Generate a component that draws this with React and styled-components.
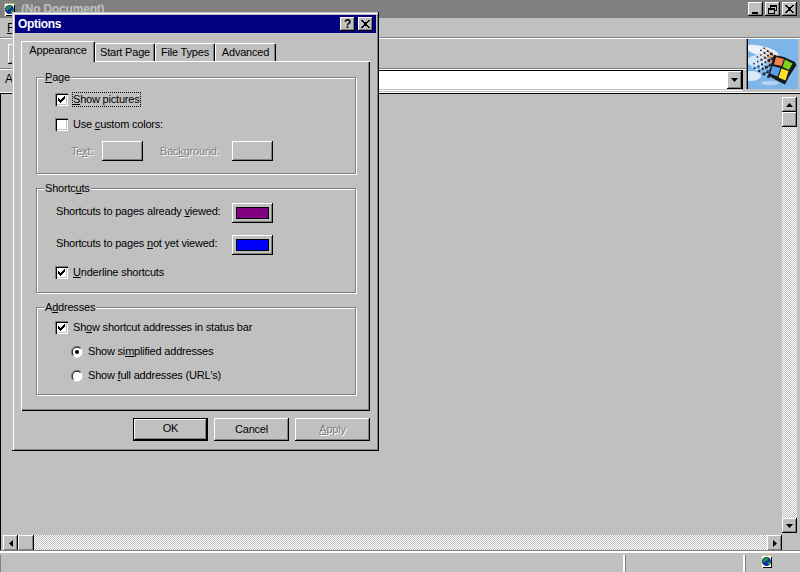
import React from "react";
import styled, { createGlobalStyle, css } from "styled-components";

const Global = createGlobalStyle`
  html, body { margin: 0; padding: 0; background: #c0c0c0; }
  body { font-family: "Liberation Sans", Arial, sans-serif; font-size: 11px; letter-spacing: -0.2px; color: #000; }
  * { box-sizing: border-box; }
  u { text-underline-offset: 1px; text-decoration-thickness: 1px; }
`;

const raised = css`
  box-shadow: inset -1px -1px 0 #000, inset 1px 1px 0 #fff, inset -2px -2px 0 #808080;
  background: #c0c0c0;
`;

const Screen = styled.div`
  position: relative;
  width: 800px;
  height: 572px;
  overflow: hidden;
  background: #c0c0c0;
  display: flex;
  flex-direction: column;
`;

/* ---------- background application ---------- */
const AppTitle = styled.div`
  height: 18px;
  background: #808080;
  display: flex;
  align-items: center;
  padding: 0 3px 0 4px;
  color: #c0c0c0;
  font-weight: 700;
  font-size: 12px;
`;
const AppTitleText = styled.span`
  margin-left: 5px;
  flex: 1;
`;
const CaptionButton = styled.div`
  ${raised}
  width: 15px;
  height: 14px;
  margin-left: ${(p) => p.$gap || 0}px;
  display: flex;
  align-items: center;
  justify-content: center;
`;
const MenuBar = styled.div`
  height: 20px;
  padding: 3px 0 0 7px;
  line-height: 14px;
  font-size: 12px;
  border-bottom: 1px solid #808080;
`;
const Chrome = styled.div`
  height: 55px;
  display: flex;
  border-top: 1px solid #fff;
`;
const Bands = styled.div`
  flex: 1;
  display: flex;
  flex-direction: column;
`;
const ToolBand = styled.div`
  height: 30px;
  padding: 5px 0 0 8px;
  border-bottom: 1px solid #808080;
  box-shadow: 0 1px 0 #fff;
`;
const ToolButton = styled.div`
  ${raised}
  width: 24px;
  height: 20px;
`;
const AddressBand = styled.div`
  flex: 1;
  display: flex;
  align-items: flex-start;
  padding: 1px 5px 0 5px;
  gap: 12px;
`;
const AddressLabel = styled.span`
  font-size: 12px;
  line-height: 19px;
  width: 8px;
`;
const AddressBox = styled.div`
  flex: 1;
  height: 20px;
  background: #fff;
  border-top: 1px solid #000;
  border-left: 1px solid #000;
  border-right: 1px solid #000;
  border-bottom: 1px solid #c0c0c0;
  box-shadow: 0 1px 0 #fff;
  display: flex;
  justify-content: flex-end;
`;
const DropButton = styled.div`
  ${raised}
  width: 15px;
  height: 18px;
  display: flex;
  align-items: center;
  justify-content: center;
`;
const LogoFrame = styled.div`
  width: 50px;
  height: 50px;
  margin: 0 2px 0 0;
  box-shadow: -1px 0 0 #000, -2px 0 0 #808080;
  overflow: hidden;
`;
const Workspace = styled.div`
  flex: 1;
  display: flex;
  flex-direction: column;
  padding: 1px 3px 0 2px;
  border-top: 1px solid #000;
  border-left: 1px solid #000;
  box-shadow: 0 -1px 0 #fff;
`;
const WorkRow = styled.div`
  flex: 1;
  display: flex;
  justify-content: flex-end;
  padding-top: 2px;
`;
const dither = css`
  background-color: #c0c0c0;
  background-image: conic-gradient(#fff 25%, #c0c0c0 0 50%, #fff 0 75%, #c0c0c0 0);
  background-size: 2px 2px;
`;
const VScroll = styled.div`
  width: 15px;
  ${dither}
  display: flex;
  flex-direction: column;
  margin-bottom: 2px;
`;
const HRow = styled.div`
  height: 16px;
  display: flex;
`;
const HScroll = styled.div`
  flex: 1;
  ${dither}
  display: flex;
  height: 16px;
`;
const ScrollButton = styled.div`
  ${raised}
  width: ${(p) => (p.$wide ? 16 : 15)}px;
  height: ${(p) => (p.$tall ? 16 : 15)}px;
  flex: none;
  display: flex;
  align-items: center;
  justify-content: center;
  ${(p) => p.$end && "margin-top: auto;"}
  ${(p) => p.$endX && "margin-left: auto;"}
`;
const Corner = styled.div`
  width: 15px;
  background: #c0c0c0;
`;
const StatusBar = styled.div`
  height: 21px;
  display: flex;
  border-top: 2px solid #fff;
  box-shadow: 0 -1px 0 #808080;
  padding-top: 2px;
`;
const StatusCell = styled.div`
  width: ${(p) => p.$w}px;
  ${(p) => p.$grow && "flex: 1;"}
  border-right: 2px solid #fff;
  border-left: 1px solid #808080;
  display: flex;
  padding-left: ${(p) => p.$pad || 0}px;
  &:last-child { border-right: 0; }
`;

/* ---------- dialog ---------- */
const Dialog = styled.div`
  position: absolute;
  left: 12px;
  top: 12px;
  width: 367px;
  height: 439px;
  padding: 3px;
  background: #c0c0c0;
  box-shadow: inset -1px -1px 0 #000, inset 1px 1px 0 #c0c0c0, inset 2px 2px 0 #fff, inset -2px -2px 0 #808080;
`;
const DialogTitle = styled.div`
  height: 18px;
  background: #000080;
  color: #fff;
  font-weight: 700;
  font-size: 12px;
  letter-spacing: -0.3px;
  display: flex;
  align-items: center;
  padding: 0 3px 0 3px;
`;
const DialogTitleText = styled.span`
  flex: 1;
`;
const DialogBody = styled.div`
  padding: 8px 6px 0 6px;
`;
const Tabs = styled.div`
  display: flex;
  height: 20px;
  align-items: flex-end;
  position: relative;
  z-index: 1;
`;
const Tab = styled.div`
  height: ${(p) => (p.$active ? 21 : 18)}px;
  width: ${(p) => p.$w}px;
  margin-bottom: ${(p) => (p.$active ? -1 : 0)}px;
  background: #c0c0c0;
  border-radius: 2px 2px 0 0;
  border-top: 1px solid #fff;
  border-left: 1px solid #fff;
  border-right: 1px solid #000;
  box-shadow: inset -1px 0 0 #808080;
  display: flex;
  justify-content: center;
  padding-top: ${(p) => (p.$active ? 1 : 1)}px;
  line-height: 14px;
`;
const Pane = styled.div`
  width: 349px;
  height: 350px;
  padding: 16px 14px 0 15px;
  box-shadow: inset 1px 1px 0 #fff, inset -1px -1px 0 #000, inset -2px -2px 0 #808080;
  display: flex;
  flex-direction: column;
  gap: 14px;
`;
const Group = styled.div`
  position: relative;
  height: ${(p) => p.$h}px;
  width: 320px;
  border: 1px solid #808080;
  box-shadow: 1px 1px 0 #fff, inset 1px 1px 0 #fff;
  padding: ${(p) => p.$pad}px 0 0 18px;
  display: flex;
  flex-direction: column;
`;
const Legend = styled.div`
  position: absolute;
  top: -8px;
  left: 7px;
  padding: 0 1px;
  line-height: 14px;
  background: #c0c0c0;
`;
const CheckRow = styled.div`
  height: 15px;
  display: flex;
  align-items: center;
  margin-top: ${(p) => p.$top || 0}px;
  padding-left: ${(p) => p.$indent || 0}px;
`;
const CheckBox = styled.div`
  width: 13px;
  height: 13px;
  flex: none;
  background: #fff;
  box-shadow: inset 1px 1px 0 #808080, inset 2px 2px 0 #000, inset -1px -1px 0 #fff, inset -2px -2px 0 #c0c0c0;
  display: flex;
  align-items: center;
  justify-content: center;
`;
const CheckLabel = styled.span`
  margin-left: 4px;
  padding: 0 1px;
  line-height: 15px;
  white-space: nowrap;
  ${(p) => p.$focus && "outline: 1px dotted #000; outline-offset: -1px;"}
`;
const RadioIcon = styled.svg`
  flex: none;
  display: block;
`;
const ColorGrid = styled.div`
  display: grid;
  grid-template-columns: 31px 41px 17px 72px 41px;
  margin: 9px 0 0 16px;
  align-items: center;
  height: 20px;
`;
const Disabled = styled.span`
  color: #808080;
  text-shadow: 1px 1px 0 #fff;
  grid-column: ${(p) => p.$col || "auto"};
  white-space: nowrap;
`;
const ColorRow = styled.div`
  width: 217px;
  height: 20px;
  margin: ${(p) => p.$top || 0}px 0 0 1px;
  display: flex;
  justify-content: space-between;
  align-items: center;
  white-space: nowrap;
`;
const ColorRowLabel = styled.span`
  padding-bottom: 4px;
`;
const ColorButton = styled.div`
  ${raised}
  width: 41px;
  height: 20px;
  padding: 4px;
  display: flex;
  flex: none;
`;
const Swatch = styled.div`
  flex: 1;
  border: 1px solid #000;
  background: ${(p) => p.$color};
`;
const Buttons = styled.div`
  display: flex;
  justify-content: flex-end;
  gap: 6px;
  margin-top: 7px;
`;
const PushButton = styled.div`
  width: 75px;
  height: 23px;
  ${raised}
  display: flex;
  align-items: center;
  justify-content: center;
  padding-bottom: 2px;
  ${(p) => p.$default && "border: 1px solid #000; padding-bottom: 3px;"}
`;

/* ---------- drawings ---------- */
const Arrow = ({ dir }) => {
  const pts = {
    up: "0,4 7,4 3.5,0",
    down: "0,0 7,0 3.5,4",
    left: "4,0 4,7 0,3.5",
    right: "0,0 0,7 4,3.5",
  }[dir];
  const horiz = dir === "left" || dir === "right";
  return (
    <svg width={horiz ? 4 : 7} height={horiz ? 7 : 4} viewBox={horiz ? "0 0 4 7" : "0 0 7 4"}>
      <polygon points={pts} fill="#000" />
    </svg>
  );
};

const CheckMark = () => (
  <svg width="7" height="7" viewBox="0 0 7 7" shapeRendering="crispEdges">
    <path d="M6 0h1v1H6z M5 1h2v1H5z M0 2h1v1H0z M4 2h3v1H4z M0 3h2v1H0z M3 3h3v1H3z M0 4h5v1H0z M1 5h3v1H1z M2 6h1v1H2z" fill="#000" />
  </svg>
);

const Radio = ({ on }) => (
  <RadioIcon width="12" height="12" viewBox="0 0 12 12">
    <circle cx="6" cy="6" r="5.5" fill="#fff" />
    <path d="M1.8 10.2A5.5 5.5 0 0 1 10.2 1.8" fill="none" stroke="#808080" strokeWidth="1" />
    <path d="M2.6 9.4A4.5 4.5 0 0 1 9.4 2.6" fill="none" stroke="#000" strokeWidth="1" />
    {on && <circle cx="6" cy="6" r="2" fill="#000" />}
  </RadioIcon>
);

const GlobeDoc = () => (
  <svg width="12" height="13" viewBox="0 0 12 13" shapeRendering="crispEdges">
    <rect x="0.5" y="0.5" width="10" height="12" fill="#fff" stroke="#e8e040" strokeDasharray="1 1" />
    <path d="M11 2v11h-9v-1h8v-10z" fill="#000" />
    <g shapeRendering="auto">
      <circle cx="5.5" cy="6.5" r="4.5" fill="#0a2f9c" />
      <path d="M3 3.5c2-1.2 4-1 4.5 0l-1 2-2 .5-1 2-1.500-1.500zM6.500 7.500l2.500-1 .5 2-2 2z" fill="#1f9a3a" />
    </g>
  </svg>
);

/* the trail of small squares that streams off the flag */
const trail = [];
for (let c = 0; c < 8; c++) {
  for (let r = 0; r < 7; r++) {
    const t = r / 6;
    const topX = 25 - 1.6 * c;
    const topY = 16 - 1.25 * c;
    const botX = 19 - 2.2 * c;
    const botY = 36 - 1.25 * c;
    const x = topX + (botX - topX) * t;
    const y = topY + (botY - topY) * t;
    const warm = r < 3;
    const size = c > 5 ? 1.5 : c > 2 ? 2 : 2.8;
    const dark = (c + r) % 2 === 0;
    trail.push({
      x,
      y,
      size,
      fill: dark ? "#1a2430" : warm ? (c < 4 ? "#f2905e" : "#f9c9ac") : c < 4 ? "#7fbcec" : "#d2e8f9",
    });
  }
}

const WinLogo = () => (
  <svg width="50" height="50" viewBox="0 0 50 50">
    <rect width="50" height="50" fill="#7db5e9" />
    <ellipse cx="14" cy="12" rx="17" ry="5" fill="#f2f7fd" opacity=".95" transform="rotate(14 14 12)" />
    <ellipse cx="10" cy="22" rx="11" ry="6" fill="#dcebf9" opacity=".9" />
    <ellipse cx="22" cy="44" rx="9" ry="2" fill="#cfe3f6" opacity=".7" />
    <ellipse cx="3" cy="37" rx="10" ry="5" fill="#eaf3fc" opacity=".85" />
    {trail.map((t, i) => (
      <rect key={i} x={t.x} y={t.y} width={t.size} height={t.size} fill={t.fill} />
    ))}
    <polygon points="26,16 36,18 47,23 48.500,26 42,36 37,45.500 28,41 20,36.500 23,27" fill="#14181c" />
    <polygon points="28,18 36,20 33.500,27 26,25.500" fill="#f5824a" />
    <polygon points="37,20.500 44.500,24.500 41,31 34.500,28" fill="#7ed321" />
    <polygon points="24.500,27 32.500,29 29.500,37.500 22,34.500" fill="#5a9fe6" />
    <polygon points="33.500,29.500 40.500,32 37.500,41.500 30.500,38.500" fill="#fbe02c" />
  </svg>
);

const Minimize = () => (
  <svg width="9" height="9" viewBox="0 0 9 9" shapeRendering="crispEdges">
    <rect x="1" y="7" width="6" height="2" fill="#000" />
  </svg>
);
const Restore = () => (
  <svg width="9" height="9" viewBox="0 0 9 9" fill="none" stroke="#000" shapeRendering="crispEdges">
    <path d="M2.500 2.500v-2h6v5h-2" />
    <path d="M2.500 1.500h6" />
    <rect x="0.500" y="3.500" width="6" height="5" />
    <path d="M0.500 4.500h6" />
  </svg>
);
const CloseX = () => (
  <svg width="9" height="8" viewBox="0 0 9 8" shapeRendering="crispEdges">
    <path d="M0 0h2v1h1v1h3v-1h1v-1h2v1h-1v1h-1v1h-1v2h1v1h1v1h1v1h-2v-1h-1v-1h-3v1h-1v1h-2v-1h1v-1h1v-1h1v-2h-1v-1h-1v-1h-1z" fill="#000" />
  </svg>
);
const HelpGlyph = styled.span`
  font-weight: 700;
  font-size: 12px;
  line-height: 12px;
  color: #000;
`;

export default function App() {
  return (
    <Screen>
      <Global />
      <AppTitle>
        <GlobeDoc />
        <AppTitleText>(No Document)</AppTitleText>
        <CaptionButton><Minimize /></CaptionButton>
        <CaptionButton $gap={2}><Restore /></CaptionButton>
        <CaptionButton $gap={2}><CloseX /></CaptionButton>
      </AppTitle>
      <MenuBar><u>F</u></MenuBar>
      <Chrome>
        <Bands>
          <ToolBand><ToolButton /></ToolBand>
          <AddressBand>
            <AddressLabel>A</AddressLabel>
            <AddressBox>
              <DropButton><Arrow dir="down" /></DropButton>
            </AddressBox>
          </AddressBand>
        </Bands>
        <LogoFrame><WinLogo /></LogoFrame>
      </Chrome>
      <Workspace>
        <WorkRow>
          <VScroll>
            <ScrollButton><Arrow dir="up" /></ScrollButton>
            <ScrollButton />
            <ScrollButton $end><Arrow dir="down" /></ScrollButton>
          </VScroll>
        </WorkRow>
        <HRow>
          <HScroll>
            <ScrollButton $tall><Arrow dir="left" /></ScrollButton>
            <ScrollButton $tall $wide />
            <ScrollButton $tall $endX><Arrow dir="right" /></ScrollButton>
          </HScroll>
          <Corner />
        </HRow>
      </Workspace>
      <StatusBar>
        <StatusCell $w={625} />
        <StatusCell $w={120} />
        <StatusCell $grow $pad={15}><GlobeDoc /></StatusCell>
      </StatusBar>

      <Dialog>
        <DialogTitle>
          <DialogTitleText>Options</DialogTitleText>
          <CaptionButton><HelpGlyph>?</HelpGlyph></CaptionButton>
          <CaptionButton $gap={3}><CloseX /></CaptionButton>
        </DialogTitle>
        <DialogBody>
          <Tabs>
            <Tab $active $w={74}>Appearance</Tab>
            <Tab $w={60}>Start Page</Tab>
            <Tab $w={60}>File Types</Tab>
            <Tab $w={61}>Advanced</Tab>
          </Tabs>
          <Pane>
            <Group $h={97} $pad={14}>
              <Legend><u>P</u>age</Legend>
              <CheckRow>
                <CheckBox><CheckMark /></CheckBox>
                <CheckLabel $focus><u>S</u>how pictures</CheckLabel>
              </CheckRow>
              <CheckRow $top={10}>
                <CheckBox />
                <CheckLabel>Use <u>c</u>ustom colors:</CheckLabel>
              </CheckRow>
              <ColorGrid>
                <Disabled>Te<u>x</u>t:</Disabled>
                <ColorButton />
                <Disabled $col={4}>Bac<u>k</u>ground:</Disabled>
                <ColorButton />
              </ColorGrid>
            </Group>
            <Group $h={105} $pad={14}>
              <Legend>Shortc<u>u</u>ts</Legend>
              <ColorRow>
                <ColorRowLabel>Shortcuts to pages already <u>v</u>iewed:</ColorRowLabel>
                <ColorButton><Swatch $color="#800080" /></ColorButton>
              </ColorRow>
              <ColorRow $top={12}>
                <ColorRowLabel>Shortcuts to pages <u>n</u>ot yet viewed:</ColorRowLabel>
                <ColorButton><Swatch $color="#0000ff" /></ColorButton>
              </ColorRow>
              <CheckRow $top={10}>
                <CheckBox><CheckMark /></CheckBox>
                <CheckLabel><u>U</u>nderline shortcuts</CheckLabel>
              </CheckRow>
            </Group>
            <Group $h={88} $pad={12}>
              <Legend>A<u>d</u>dresses</Legend>
              <CheckRow>
                <CheckBox><CheckMark /></CheckBox>
                <CheckLabel>Sh<u>o</u>w shortcut addresses in status bar</CheckLabel>
              </CheckRow>
              <CheckRow $top={9} $indent={16}>
                <Radio on />
                <CheckLabel>Show si<u>m</u>plified addresses</CheckLabel>
              </CheckRow>
              <CheckRow $top={9} $indent={16}>
                <Radio />
                <CheckLabel>Show <u>f</u>ull addresses (URL's)</CheckLabel>
              </CheckRow>
            </Group>
          </Pane>
          <Buttons>
            <PushButton $default>OK</PushButton>
            <PushButton>Cancel</PushButton>
            <PushButton><Disabled><u>A</u>pply</Disabled></PushButton>
          </Buttons>
        </DialogBody>
      </Dialog>
    </Screen>
  );
}
